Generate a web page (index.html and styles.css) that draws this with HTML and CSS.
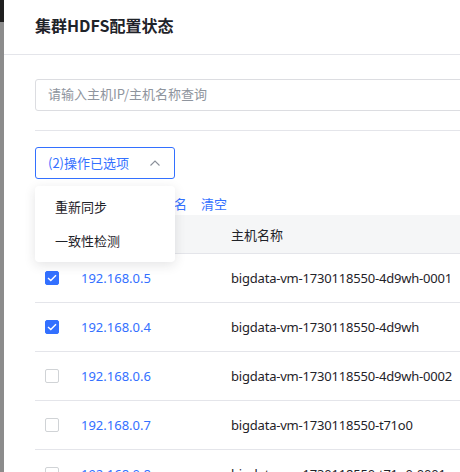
FILE: index.html
```html
<!DOCTYPE html>
<html lang="zh">
<head>
<meta charset="utf-8">
<link rel="stylesheet" href="styles.css">
</head>
<body>
<div class="strip"><div class="strip-top"></div></div>
<div class="drawer">
  <div class="header"><h1 class="title">集群HDFS配置状态</h1></div>
  <div class="content">
    <div class="search"><span class="placeholder">请输入主机IP/主机名称查询</span></div>
    <div class="divider"></div>
    <div class="dropdown">
      <span class="dd-label">(2)操作已选项</span>
      <svg class="chev" width="10" height="6" viewBox="0 0 10 6"><path d="M0.5 5.5 L5 1 L9.5 5.5" fill="none" stroke="#8a8f99" stroke-width="1.1"/></svg>
    </div>
    <div class="selbar"><span class="sel-info">已选择 2 项</span><a class="link">复制主机名</a><a class="link">清空</a></div>
    <div class="table">
      <div class="row head"><div class="c-check"></div><div class="c-ip">主机IP</div><div class="c-name">主机名称</div></div>
      <div class="row"><div class="c-check"><span class="cb on"><svg width="10" height="8" viewBox="0 0 10 8"><path d="M1 4 L3.8 6.6 L9 1.2" fill="none" stroke="#fff" stroke-width="1.4"/></svg></span></div><div class="c-ip ip">192.168.0.5</div><div class="c-name">bigdata-vm-1730118550-4d9wh-0001</div></div>
      <div class="row"><div class="c-check"><span class="cb on"><svg width="10" height="8" viewBox="0 0 10 8"><path d="M1 4 L3.8 6.6 L9 1.2" fill="none" stroke="#fff" stroke-width="1.4"/></svg></span></div><div class="c-ip ip">192.168.0.4</div><div class="c-name">bigdata-vm-1730118550-4d9wh</div></div>
      <div class="row"><div class="c-check"><span class="cb"></span></div><div class="c-ip ip">192.168.0.6</div><div class="c-name">bigdata-vm-1730118550-4d9wh-0002</div></div>
      <div class="row"><div class="c-check"><span class="cb"></span></div><div class="c-ip ip">192.168.0.7</div><div class="c-name">bigdata-vm-1730118550-t71o0</div></div>
      <div class="row"><div class="c-check"><span class="cb"></span></div><div class="c-ip ip">192.168.0.8</div><div class="c-name">bigdata-vm-1730118550-t71o0-0001</div></div>
    </div>
    <div class="menu">
      <div class="menu-item">重新同步</div>
      <div class="menu-item">一致性检测</div>
    </div>
  </div>
</div>
</body>
</html>
```
FILE: styles.css
```css
* { box-sizing: border-box; }
html, body { margin: 0; padding: 0; height: 100%; }
body {
  display: flex;
  width: 460px;
  height: 472px;
  overflow: hidden;
  font-family: "Noto Sans", "Noto Sans CJK SC", sans-serif;
  font-size: 13px;
  color: #1f2329;
  background: #fff;
}
.strip { width: 4px; flex: none; background: #8c8c8c; }
.strip-top { height: 22px; background: #1f1f1f; }
.drawer { flex: 1; min-width: 0; overflow: hidden; background: #fff; position: relative; }
.header {
  height: 55px;
  border-bottom: 1px solid #e4e5ea;
  padding-left: 31px;
  padding-bottom: 4px;
  display: flex;
  align-items: center;
}
.title {
  margin: 0;
  font-size: 16px;
  font-weight: 700;
  color: #1f2329;
  font-family: "Noto Sans CJK SC", sans-serif;
}
.content { padding: 24px 0 0 31px; position: relative; }
.search {
  width: 460px;
  height: 32px;
  border: 1px solid #dcdde1;
  border-radius: 3px;
  display: flex;
  align-items: center;
  padding-left: 12px;
  padding-bottom: 3px;
}
.placeholder { color: #8f959e; font-family: "Noto Sans CJK SC", sans-serif; font-size: 13px; }
.divider { margin-top: 19px; height: 1px; background: #e4e5ea; }
.dropdown {
  margin-top: 16px;
  width: 140px;
  height: 32px;
  border: 1px solid #3370ff;
  border-radius: 3px;
  display: flex;
  align-items: center;
  justify-content: space-between;
  padding: 0 14px 2px 12px;
}
.dd-label { color: #3370ff; font-family: "Noto Sans CJK SC", sans-serif; }
.chev { display: block; margin-top: 2px; }
.selbar {
  margin-top: 14px;
  height: 22px;
  line-height: 22px;
  display: flex;
  gap: 14px;
  padding-left: 8px;
  font-family: "Noto Sans CJK SC", sans-serif;
}
.sel-info { color: #646a73; }
.link { color: #3370ff; }
.table { width: 460px; }
.row {
  display: flex;
  align-items: center;
  height: 49px;
  border-bottom: 1px solid #e4e5ea;
}
.row.head { height: 39px; background: #f5f6f7; }
.c-check { width: 46px; padding-left: 10px; display: flex; align-items: center; }
.c-ip { width: 150px; font-family: "Noto Sans CJK SC", sans-serif; }
.c-name { flex: 1; white-space: nowrap; color: #1f2329; letter-spacing: -0.2px; }
.head .c-name, .head .c-ip { color: #1f2329; font-family: "Noto Sans CJK SC", sans-serif; letter-spacing: 0; }
.ip { color: #3370ff; font-family: "Noto Sans", sans-serif; }
.cb {
  width: 14px;
  height: 14px;
  border: 1px solid #d0d3d6;
  border-radius: 2px;
  display: flex;
  align-items: center;
  justify-content: center;
  background: #fff;
}
.cb.on { background: #3370ff; border-color: #3370ff; }
.menu {
  position: absolute;
  left: 31px;
  top: 131px;
  width: 140px;
  padding: 4px 0;
  background: #fff;
  border-radius: 4px;
  box-shadow: 0 3px 12px rgba(31, 35, 41, 0.12);
}
.menu-item {
  height: 34px;
  line-height: 34px;
  padding-left: 20px;
  color: #1f2329;
  font-family: "Noto Sans CJK SC", sans-serif;
}
```
